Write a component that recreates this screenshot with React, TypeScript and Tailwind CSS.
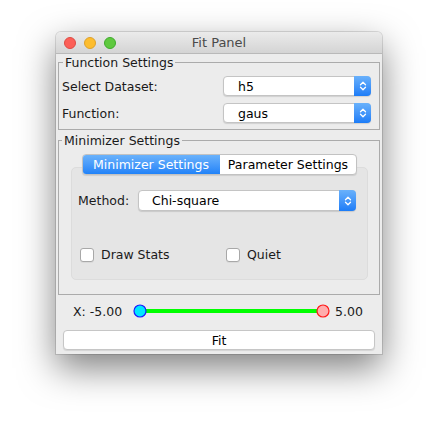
import React from "react";

const Chevrons = () => (
  <svg width="8" height="12" viewBox="0 0 8 12" fill="none">
    <path d="M1.5 4.8 L4 2.3 L6.5 4.8" stroke="white" strokeWidth="1.3" strokeLinecap="round" strokeLinejoin="round" />
    <path d="M1.5 7.2 L4 9.7 L6.5 7.2" stroke="white" strokeWidth="1.3" strokeLinecap="round" strokeLinejoin="round" />
  </svg>
);

const Combo = ({ value, focused = false, className = "", textPad = "pl-[14px]" }: { value: string; focused?: boolean; className?: string; textPad?: string }) => (
  <div
    className={
      "flex items-stretch bg-white rounded-[4px] border border-[#c4c4c4] shadow-[0_1px_1px_rgba(0,0,0,0.12)] " +
      (focused ? "shadow-[0_0_0_3px_rgba(110,165,240,0.55)] border-[#8fb7ee] " : "") +
      className
    }
  >
    <div className={"flex-1 flex items-center text-black " + textPad}>{value}</div>
    <div className="w-[17px] -my-px -mr-px flex items-center justify-center rounded-r-[4px] bg-gradient-to-b from-[#69b1fb] to-[#1b7cf7]">
      <Chevrons />
    </div>
  </div>
);

const Checkbox = ({ label }: { label: string }) => (
  <div className="flex items-center gap-[7px]">
    <div className="w-[14px] h-[14px] bg-white rounded-[3px] border border-[#a8a8a8] shadow-[0_1px_0_rgba(0,0,0,0.05)]" />
    <span>{label}</span>
  </div>
);

export default function App() {
  return (
    <div className="w-[438px] h-[435px] bg-white pt-[32px] pl-[56px]" style={{ fontFamily: '"DejaVu Sans", sans-serif' }}>
      <div className="w-[326px] bg-[#ececec] rounded-t-[5px] shadow-[0_14px_36px_rgba(0,0,0,0.5),0_0_0_1px_rgba(0,0,0,0.12)] text-[12.5px] leading-[15px] text-[#1a1a1a]">
        {/* title bar */}
        <div className="h-[22px] relative flex items-center justify-center rounded-t-[5px] bg-gradient-to-b from-[#ebebeb] to-[#d4d4d4] border-b border-[#b9b9b9]">
          <div className="absolute left-[8px] top-[5px] flex gap-[8px]">
            <div className="w-[12px] h-[12px] rounded-full bg-[#fc5f57] border border-[#de4b43]" />
            <div className="w-[12px] h-[12px] rounded-full bg-[#fdbd2e] border border-[#dea12a]" />
            <div className="w-[12px] h-[12px] rounded-full bg-[#5fc93f] border border-[#3fab2c]" />
          </div>
          <span className="text-[13px] text-[#4a4a4a]">Fit Panel</span>
        </div>

        <div className="pt-[1px] px-[2px] pb-[4px]">
          {/* Function settings */}
          <fieldset className="border border-[#ababab] pl-[3px] pr-[8px] pb-[6px]">
            <legend className="px-[2px] ml-[1px] leading-[15px]">Function Settings</legend>
            <div className="mt-[6px] flex flex-col gap-[7px]">
              <div className="flex items-center justify-between">
                <span>Select Dataset:</span>
                <Combo value="h5" focused className="w-[148px] h-[20px]" />
              </div>
              <div className="flex items-center justify-between">
                <span>Function:</span>
                <Combo value="gaus" className="w-[148px] h-[20px]" />
              </div>
            </div>
          </fieldset>

          {/* Minimizer settings */}
          <fieldset className="mt-[3px] border border-[#ababab] pl-[12px] pr-[11px] pb-[14px]">
            <legend className="px-[2px] ml-[-9px] leading-[15px]">Minimizer Settings</legend>
            <div className="mt-[6px] relative z-10 mx-auto w-[275px] h-[21px] flex rounded-[4px] border border-[#c2c2c2] bg-white shadow-[0_1px_1px_rgba(0,0,0,0.1)] overflow-hidden">
              <div className="w-[138px] -my-px -ml-px flex items-center justify-center text-white bg-gradient-to-b from-[#6db4fb] to-[#1a80f8] rounded-l-[4px]">
                Minimizer Settings
              </div>
              <div className="flex-1 flex items-center justify-center text-black">Parameter Settings</div>
            </div>
            <div className="-mt-[8px] h-[113px] rounded-[5px] bg-[#e5e5e5] border border-[#dcdcdc] pt-[22px] pl-[6px] pr-[11px]">
              <div className="flex items-center justify-between">
                <span>Method:</span>
                <Combo value="Chi-square" className="w-[218px] h-[21px]" textPad="pl-[13px]" />
              </div>
              <div className="mt-[36px] flex pl-[2px]">
                <div className="w-[146px]">
                  <Checkbox label="Draw Stats" />
                </div>
                <Checkbox label="Quiet" />
              </div>
            </div>
          </fieldset>

          {/* slider row */}
          <div className="mt-[8px] h-[16px] flex items-center pl-[15px]">
            <span className="w-[55px]">X: -5.00</span>
            <svg width="205" height="16" viewBox="0 0 205 16" className="ml-[1px]">
              <line x1="11" y1="8" x2="194" y2="8" stroke="#00ff00" strokeWidth="4" />
              <circle cx="11" cy="8" r="6" fill="#00e8ff" stroke="#1a1aff" strokeWidth="1.2" />
              <circle cx="194" cy="8" r="6" fill="#ffadad" stroke="#ff1a1a" strokeWidth="1.2" />
            </svg>
            <span className="ml-[1px]">5.00</span>
          </div>

          {/* Fit button */}
          <div className="mt-[11px] mx-[5px] h-[20px] flex items-center justify-center bg-white rounded-[4px] border border-[#c6c6c6] shadow-[0_1px_1px_rgba(0,0,0,0.1)] text-black">
            Fit
          </div>
        </div>
      </div>
    </div>
  );
}
